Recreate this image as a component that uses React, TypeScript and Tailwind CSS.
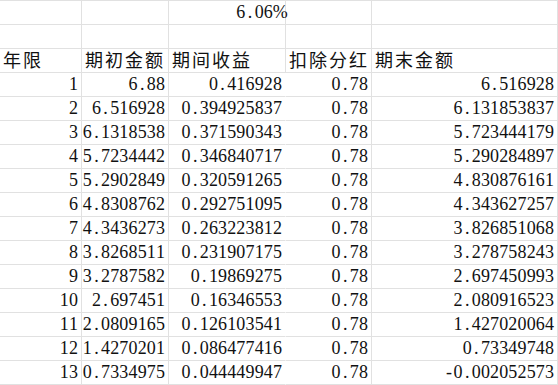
/**
 * Spreadsheet: annual dividend drawdown table
 */

type Row = [number, string, string, string, string];

const rows: Row[] = [
  [1, '6.88', '0.416928', '0.78', '6.516928'],
  [2, '6.516928', '0.394925837', '0.78', '6.131853837'],
  [3, '6.1318538', '0.371590343', '0.78', '5.723444179'],
  [4, '5.7234442', '0.346840717', '0.78', '5.290284897'],
  [5, '5.2902849', '0.320591265', '0.78', '4.830876161'],
  [6, '4.8308762', '0.292751095', '0.78', '4.343627257'],
  [7, '4.3436273', '0.263223812', '0.78', '3.826851068'],
  [8, '3.8268511', '0.231907175', '0.78', '3.278758243'],
  [9, '3.2787582', '0.19869275', '0.78', '2.697450993'],
  [10, '2.697451', '0.16346553', '0.78', '2.080916523'],
  [11, '2.0809165', '0.126103541', '0.78', '1.427020064'],
  [12, '1.4270201', '0.086477416', '0.78', '0.73349748'],
  [13, '0.7334975', '0.044449947', '0.78', '-0.002052573'],
];

const headers = ['年限', '期初金额', '期间收益', '扣除分红', '期末金额'];

// half-width glyph cells, like the sheet's monospaced digits
const Num = ({ v }: { v: string }) => (
  <span className="flex font-['Liberation_Serif',serif] text-[18px]">
    {v.split('').map((c, i) => (
      <span key={i} className="w-[9.15px] text-center">
        {c}
      </span>
    ))}
  </span>
);

const cell = 'h-[24px] border-b border-r border-[#e1e1e1] flex items-center overflow-visible whitespace-nowrap';

export default function App() {
  return (
    <div className="w-[558px] h-[385px] bg-white text-[#111] overflow-hidden">
      <div className="grid grid-cols-[82px_87px_117px_86px_186px] border-t border-[#e1e1e1]">
        {/* row 1 */}
        <div className={cell} />
        <div className={cell} />
        <div className={`${cell} justify-end pr-[3px]`}>
          <Num v="6.06%" />
        </div>
        <div className={cell} />
        <div className={cell} />

        {/* row 2 */}
        {[0, 1, 2, 3, 4].map((i) => (
          <div key={i} className={cell} />
        ))}

        {/* header */}
        {headers.map((h) => (
          <div
            key={h}
            className={`${cell} pl-[3px] pb-[3px] font-['Noto_Sans_CJK_SC',sans-serif] text-[18px] tracking-[2px]`}
          >
            {h}
          </div>
        ))}

        {rows.map((r) => (
          <div key={r[0]} className="contents">
            <div className={`${cell} justify-end pr-[3px]`}>
              <Num v={String(r[0])} />
            </div>
            <div className={`${cell} justify-end pr-[3px]`}>
              <Num v={r[1]} />
            </div>
            <div className={`${cell} justify-end pr-[3px] border-r-transparent`}>
              <Num v={r[2]} />
            </div>
            <div className={`${cell} justify-end pr-[3px]`}>
              <Num v={r[3]} />
            </div>
            <div className={`${cell} justify-end pr-[3px]`}>
              <Num v={r[4]} />
            </div>
          </div>
        ))}
      </div>
    </div>
  );
}
